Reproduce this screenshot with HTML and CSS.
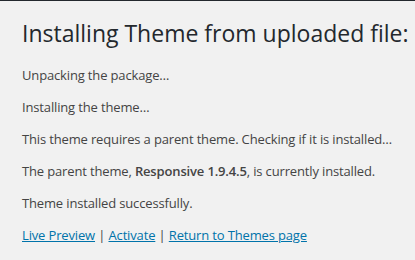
FILE: index.html
```html
<!DOCTYPE html>
<html lang="en">
  <head>
    <meta charset="UTF-8" />
    <title>Install Themes</title>
    <link rel="stylesheet" href="styles.css">
  </head>
  <body>
    <div class="adminbar"></div>

    <div class="wrap">
      <h1>Installing Theme from uploaded file:</h1>

      <p>Unpacking the package&hellip;</p>
      <p>Installing the theme&hellip;</p>
      <p>This theme requires a parent theme. Checking if it is installed&hellip;</p>
      <p>The parent theme, <strong>Responsive 1.9.4.5</strong>, is currently installed.</p>
      <p>Theme installed successfully.</p>

      <p class="actions">
        <a href="#">Live Preview</a> | <a href="#">Activate</a> | <a href="#">Return to Themes page</a>
      </p>
    </div>
  </body>
</html>
```

FILE: styles.css
```css
* {
  box-sizing: border-box;
}

html,
body {
  margin: 0;
  padding: 0;
  height: 100%;
  overflow: hidden;
}

body {
  background: #f1f1f1;
  color: #444;
  font-family: "Open Sans", sans-serif;
  font-size: 13px;
  line-height: 19px;
}

.adminbar {
  height: 1px;
  background: #23282d;
}

.wrap {
  padding: 9px 0 0 22px;
}

h1 {
  margin: 0;
  padding: 9px 0 4px;
  font-size: 23px;
  font-weight: 400;
  line-height: 1.3;
  color: #23282d;
  white-space: nowrap;
}

p {
  margin: 13px 0;
  letter-spacing: -0.15px;
}

strong {
  font-weight: 600;
}

a {
  color: #0073aa;
}
```
